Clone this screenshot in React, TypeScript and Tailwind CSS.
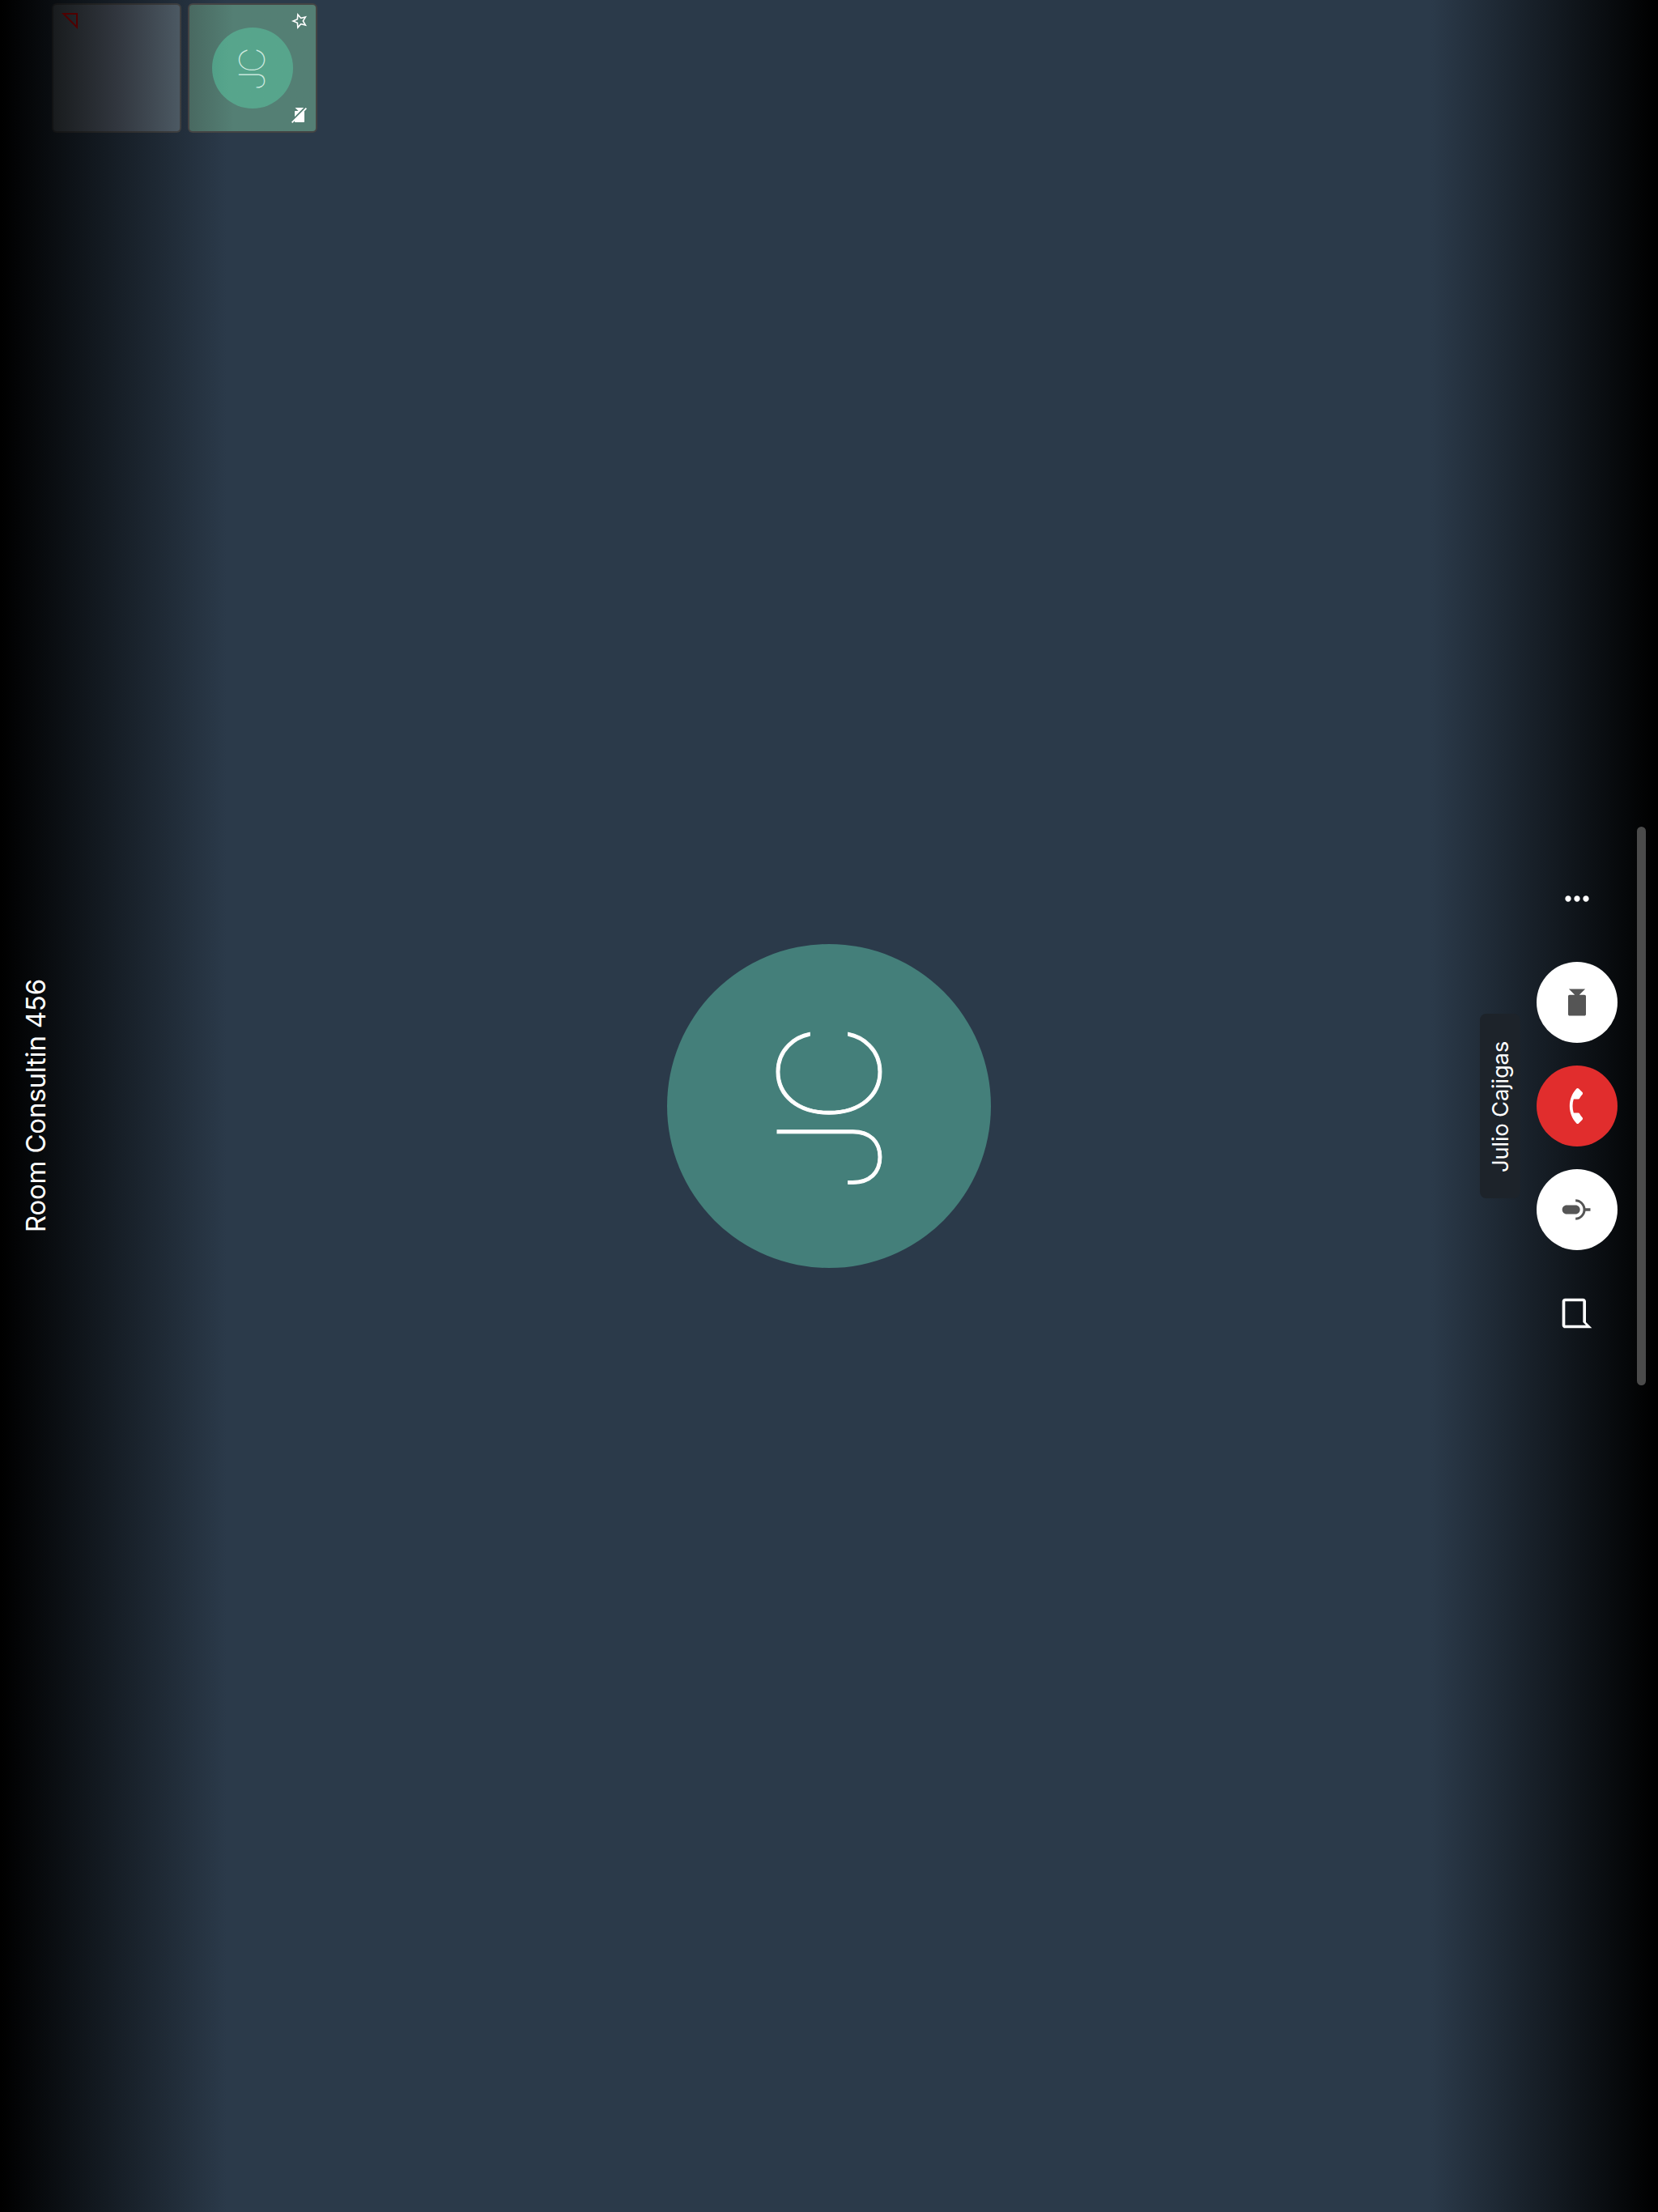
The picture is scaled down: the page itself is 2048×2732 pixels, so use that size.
import React from "react";

const PATHS = {
  signalNull: "M20 6.83V20H6.83L20 6.83M22 2L2 22h20V2z",
  star: "M22 9.24l-7.19-.62L12 2 9.19 8.63 2 9.24l5.46 4.73L5.82 21 12 17.27 18.18 21l-1.63-7.03L22 9.24zM12 15.4l-3.76 2.27 1-4.28-3.32-2.88 4.38-.38L12 6.1l1.71 4.04 4.38.38-3.32 2.88 1 4.28L12 15.4z",
  videoOff: "M21 6.5l-4 4V7c0-.55-.45-1-1-1H9.82L21 17.18V6.5zM3.27 2L2 3.27 4.73 6H4c-.55 0-1 .45-1 1v10c0 .55.45 1 1 1h12c.21 0 .39-.08.54-.18L19.73 21 21 19.73 3.27 2z",
  video: "M17 10.5V7c0-.55-.45-1-1-1H4c-.55 0-1 .45-1 1v10c0 .55.45 1 1 1h12c.55 0 1-.45 1-1v-3.5l4 4v-11l-4 4z",
  mic: "M12 14c1.66 0 2.99-1.34 2.99-3L15 5c0-1.66-1.34-3-3-3S9 3.34 9 5v6c0 1.66 1.34 3 3 3zm5.3-3c0 3-2.54 5.1-5.3 5.1S6.7 14 6.7 11H5c0 3.41 2.72 6.23 6 6.72V21h2v-3.28c3.28-.48 6-3.3 6-6.72h-1.7z",
  hangup: "M12 9c-1.6 0-3.15.25-4.6.72v3.1c0 .39-.23.74-.56.9-.98.49-1.87 1.12-2.66 1.85-.18.18-.43.28-.7.28-.28 0-.53-.11-.71-.29L.29 13.08c-.18-.17-.29-.42-.29-.7 0-.28.11-.53.29-.71C3.34 8.78 7.46 7 12 7s8.66 1.78 11.71 4.67c.18.18.29.43.29.71 0 .28-.11.53-.29.71l-2.48 2.48c-.18.18-.43.29-.71.29-.27 0-.52-.11-.7-.28-.79-.74-1.69-1.36-2.67-1.85-.33-.16-.56-.5-.56-.9v-3.1C15.15 9.25 13.6 9 12 9z",
  chat: "M20 2H4c-1.1 0-2 .9-2 2v18l4-4h14c1.1 0 2-.9 2-2V4c0-1.1-.9-2-2-2zm0 14H6l-2 2V4h16v12z",
  more: "M6 10c-1.1 0-2 .9-2 2s.9 2 2 2 2-.9 2-2-.9-2-2-2zm12 0c-1.1 0-2 .9-2 2s.9 2 2 2 2-.9 2-2-.9-2-2-2zm-6 0c-1.1 0-2 .9-2 2s.9 2 2 2 2-.9 2-2-.9-2-2-2z",
};

function Icon({ name, className }: { name: keyof typeof PATHS; className: string }) {
  return (
    <svg viewBox="0 0 24 24" fill="currentColor" className={className} aria-hidden="true">
      <path d={PATHS[name]} />
    </svg>
  );
}

function Filmstrip() {
  return (
    <div className="flex gap-2 pt-1">
      <div className="h-40 w-40 rounded-[6px] bg-linear-to-r from-[#121314] via-[#2a2a2a] to-[#3e3f40] p-0.5">
        <div className="flex h-full items-start rounded-[4px] bg-linear-to-r from-[#191c1e] via-[#31363e] to-[#4c5963] p-2">
          <Icon name="signalNull" className="h-6 w-6 -rotate-90 text-[#500000]" />
        </div>
      </div>
      <div className="h-40 w-40 rounded-[6px] bg-[#444444] p-0.5">
        <div className="flex h-full items-center rounded-[4px] bg-linear-to-r from-[#496961] to-[#547f74] to-35% py-2 pr-2">
          <div className="ml-7 flex h-[100px] w-[100px] shrink-0 items-center justify-center rounded-full bg-linear-to-r from-[#52a088] to-[#57a58c] to-20% pt-1">
            <span className="rotate-180 text-[43.5px] leading-none font-thin tracking-[-2.5px] text-[#d9f0e6] [-webkit-text-stroke:0.2px] [writing-mode:vertical-rl]">JC</span>
          </div>
          <div className="-ml-1 flex h-full flex-col justify-between text-white">
            <Icon name="star" className="h-6 w-6 -rotate-90" />
            <Icon name="videoOff" className="h-6 w-6 -rotate-90" />
          </div>
        </div>
      </div>
    </div>
  );
}

function Toolbar() {
  return (
    <div className="flex w-[100px] flex-col items-center gap-7">
      <button className="flex h-[100px] w-[100px] items-center justify-center text-white" aria-label="More">
        <Icon name="more" className="h-11 w-11" />
      </button>
      <button className="flex h-[100px] w-[100px] items-center justify-center rounded-full bg-white text-[#555555]" aria-label="Camera">
        <Icon name="video" className="h-11 w-11 -rotate-90" />
      </button>
      <button className="flex h-[100px] w-[100px] items-center justify-center rounded-full bg-[#e12d2d] text-white" aria-label="Hang up">
        <Icon name="hangup" className="h-11 w-11 -rotate-90" />
      </button>
      <button className="flex h-[100px] w-[100px] items-center justify-center rounded-full bg-white text-[#555555]" aria-label="Microphone">
        <Icon name="mic" className="h-11 w-11 -rotate-90" />
      </button>
      <button className="flex h-[100px] w-[100px] items-center justify-center text-white" aria-label="Chat">
        <Icon name="chat" className="h-11 w-11 -rotate-90" />
      </button>
    </div>
  );
}

export default function App() {
  return (
    <div className="flex h-[2732px] w-[2048px] overflow-hidden bg-[linear-gradient(to_right,#000_2px,#2b3a4a_280px,#2b3a4a_1768px,#000_2044px)] font-['Inter',sans-serif] text-white">
      <div className="flex w-[392px] shrink-0">
        <header className="flex w-16 items-center justify-end">
          <h1 className="rotate-180 text-[33px] leading-10 font-normal tracking-[-0.2px] whitespace-nowrap [writing-mode:vertical-rl]">Room Consultin 456</h1>
        </header>
        <Filmstrip />
      </div>

      <main className="flex flex-1 items-center justify-center">
        <div className="flex h-[400px] w-[400px] items-center justify-center rounded-full bg-[#447f7a] pt-4">
          <span className="rotate-180 text-[174px] leading-none font-thin tracking-[-10px] [-webkit-text-stroke:0.9px] [writing-mode:vertical-rl]">JC</span>
        </div>
      </main>

      <div className="flex w-[392px] shrink-0 items-center justify-end pr-[15px]">
        <div className="mr-5 flex h-[228px] w-[50px] items-center justify-center rounded-lg bg-[#1d232a] pt-0.5">
          <span className="rotate-180 text-[27.5px] leading-9 tracking-[-0.25px] whitespace-nowrap [writing-mode:vertical-rl]">Julio Cajigas</span>
        </div>
        <Toolbar />
        <div className="ml-6 h-[690px] w-[11px] rounded-full bg-[#4b4b4b]" />
      </div>
    </div>
  );
}
